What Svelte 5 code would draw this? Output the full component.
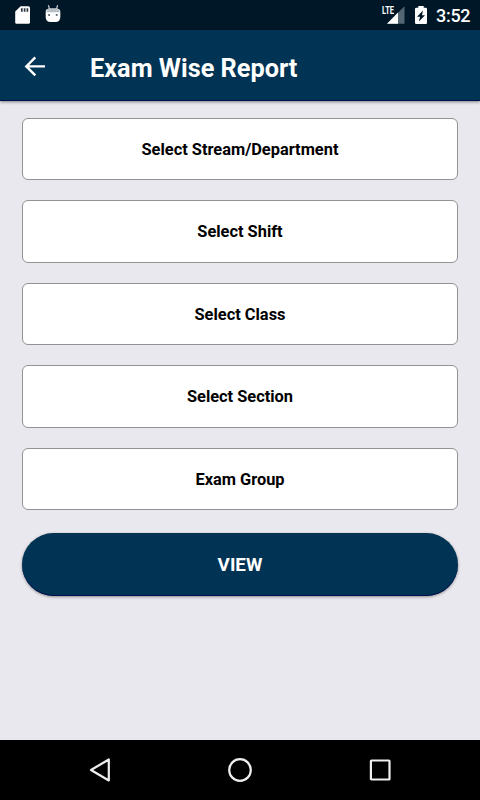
<script>
  const fields = [
    'Select Stream/Department',
    'Select Shift',
    'Select Class',
    'Select Section',
    'Exam Group'
  ];
</script>

<div class="screen">
  <div class="status">
    <svg class="sd" width="16" height="19" viewBox="0 0 16 19">
      <path fill="#fff" d="M5.6 .2H13.4Q15 .2 15 1.8V16.3Q15 17.8 13.4 17.8H1.6Q.2 17.8 .2 16.3V5.6Z" />
      <path stroke="#2b3540" stroke-width="1.7" d="M6.8 2.2V5.8M9.6 2.2V5.8M12.4 2.2V5.8" />
    </svg>
    <svg class="droid" width="17" height="19" viewBox="0 0 17 19">
      <path stroke="#b9c0c5" stroke-width="1.3" d="M3.4 .2L4.6 4.5M12.6 .2L11.4 4.5" />
      <path fill="#fff" d="M.7 7Q.7 3.7 4 3.7H12Q15.3 3.7 15.3 7V12Q15.3 17 10.3 17H5.7Q.7 17 .7 12Z" />
      <path fill="#b9c0c5" d="M1.2 7.2Q2 3.3 5 3.3H11Q14 3.3 14.8 7.2Z" />
      <path fill="#68737c" d="M3.2 9H5V11H3.2ZM10.8 9H12.6V11H10.8Z" />
    </svg>
    <span class="fill"></span>
    <svg class="signal" width="23" height="19" viewBox="0 0 23 19">
      <path fill="#526674" d="M22.5 .2V17.8H5Z" />
      <path fill="#fff" d="M16 6.6V17.8H5Z" />
      <path class="halo" d="M0 0H12.5V9.2H0Z" />
      <text x="0" y="8.1" textLength="12" lengthAdjust="spacingAndGlyphs">LTE</text>
    </svg>
    <svg class="battery" width="12" height="19" viewBox="0 0 12 19">
      <path fill="#fff" d="M3.3 0H8.7V1.8H10.8Q12 1.8 12 3V16.8Q12 18 10.8 18H1.2Q0 18 0 16.8V3Q0 1.8 1.2 1.8H3.3Z" />
      <path fill="#001728" d="M8 4.4L2 10.8H5L4 15.6L10 9.2H7Z" />
    </svg>
    <span class="clock">3:52</span>
  </div>

  <header>
    <svg width="22" height="22" viewBox="0 0 22 22" fill="none" stroke="#fff" stroke-width="2.4">
      <path d="M21 10.4H2.9M11.3 1.4L2.3 10.4L11.3 19.4" />
    </svg>
    <h1>Exam Wise Report</h1>
  </header>

  <main>
    {#each fields as field}
      <button class="field">{field}</button>
    {/each}
    <button class="view">VIEW</button>
  </main>

  <nav>
    <svg width="24" height="26" viewBox="0 0 24 26"><path d="M20.8 2.5V23.5L3 13Z" /></svg>
    <svg width="26" height="26" viewBox="0 0 26 26"><circle cx="13" cy="13" r="10.8" /></svg>
    <svg width="24" height="26" viewBox="0 0 24 26"><rect x="2.9" y="3.5" width="18.6" height="19" rx=".6" /></svg>
  </nav>
</div>

<style>
  .screen {
    width: 480px;
    height: 800px;
    display: flex;
    flex-direction: column;
    background: #e9e8ee;
    font-family: Roboto, sans-serif;
    overflow: hidden;
  }
  .status {
    height: 30px;
    flex: none;
    box-sizing: border-box;
    display: flex;
    align-items: flex-start;
    padding: 6px 10px 0 15px;
    background: #001728;
    color: #fff;
  }
  .status svg { display: block; overflow: visible; }
  .droid { margin: -1px 0 0 13.5px; }
  .fill { flex: 1; }
  .signal { margin-right: 10px; }
  .signal text {
    font: bold 11px Roboto, sans-serif;
    fill: #fff;
  }
  .halo { fill: #001728; }
  .battery { margin-right: 9px; }
  .clock {
    width: 34px;
    font-size: 18px;
    font-weight: 500;
    line-height: 19px;
    white-space: nowrap;
    letter-spacing: -0.3px;
  }
  header {
    height: 71px;
    flex: none;
    box-sizing: border-box;
    display: flex;
    align-items: center;
    padding: 3px 0 0 24px;
    background: #003354;
    box-shadow: inset 0 -1px #00104c, 0 1px 3px rgba(0, 0, 0, 0.45);
  }
  h1 {
    margin: 3px 0 0 44px;
    color: #fff;
    font-size: 25.3px;
    font-weight: 700;
    line-height: 30px;
    white-space: nowrap;
  }
  main {
    flex: 1;
    display: flex;
    flex-direction: column;
    padding: 16.5px 22px 0;
  }
  button {
    display: block;
    box-sizing: border-box;
    width: 100%;
    padding: 0;
    font-family: inherit;
    font-weight: 700;
  }
  .field {
    height: 62.5px;
    margin-bottom: 20px;
    padding-top: 1px;
    border: 1px solid #929292;
    border-radius: 6px;
    background: #fff;
    color: #000;
    font-size: 16.4px;
  }
  .view {
    height: 62.5px;
    margin-top: 3px;
    padding-top: 1px;
    border: 0;
    border-radius: 32px;
    background: #003354;
    color: #fff;
    font-size: 18.8px;
    box-shadow: inset 0 -1px #00104c, 0 1px 3px rgba(0, 0, 0, 0.4);
  }
  nav {
    height: 60px;
    flex: none;
    display: flex;
    align-items: center;
    justify-content: space-between;
    padding: 0 88px;
    background: #000;
  }
  nav svg {
    fill: none;
    stroke: #eee;
    stroke-width: 2.2;
    stroke-linejoin: round;
  }
</style>
